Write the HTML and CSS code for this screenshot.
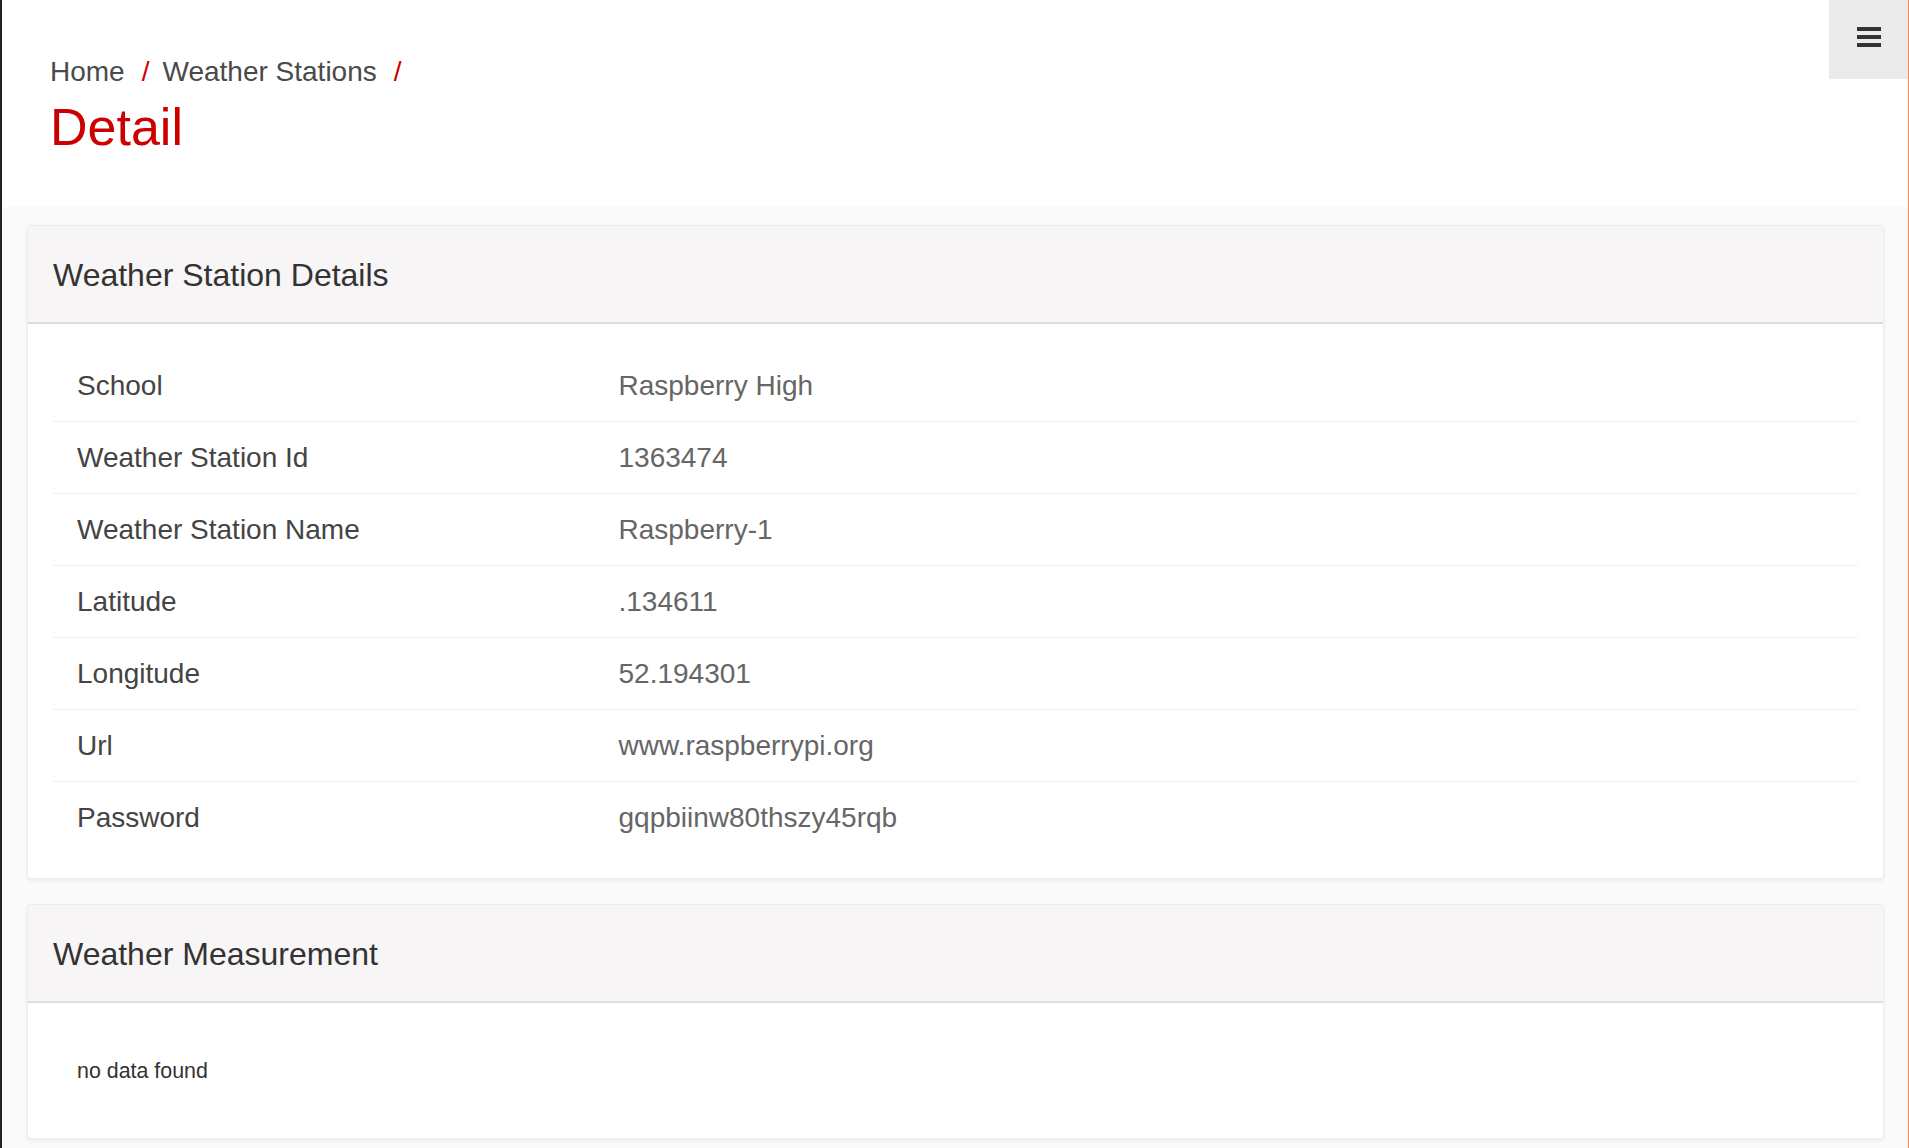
FILE: index.html
```html
<!DOCTYPE html>
<html lang="en">
<head>
<meta charset="utf-8">
<title>Detail</title>
<link rel="stylesheet" href="styles.css">
</head>
<body>
<div class="page">
  <header class="page-header">
    <nav class="breadcrumb">
      <span class="crumb">Home</span><span class="sep">/</span><span class="crumb">Weather Stations</span><span class="sep">/</span>
    </nav>
    <h1 class="page-title">Detail</h1>
    <button class="menu-btn" aria-label="menu">
      <span class="bar"></span><span class="bar"></span><span class="bar"></span>
    </button>
  </header>
  <main class="content">
    <section class="card">
      <div class="card-header"><h2 class="card-title">Weather Station Details</h2></div>
      <div class="card-body">
        <table class="detail-table">
          <colgroup><col class="col-label"><col></colgroup>
          <tbody>
            <tr><td class="label">School</td><td class="value">Raspberry High</td></tr>
            <tr><td class="label">Weather Station Id</td><td class="value">1363474</td></tr>
            <tr><td class="label">Weather Station Name</td><td class="value">Raspberry-1</td></tr>
            <tr><td class="label">Latitude</td><td class="value">.134611</td></tr>
            <tr><td class="label">Longitude</td><td class="value">52.194301</td></tr>
            <tr><td class="label">Url</td><td class="value">www.raspberrypi.org</td></tr>
            <tr><td class="label">Password</td><td class="value">gqpbiinw80thszy45rqb</td></tr>
          </tbody>
        </table>
      </div>
    </section>
    <section class="card">
      <div class="card-header"><h2 class="card-title">Weather Measurement</h2></div>
      <div class="card-body">
        <p class="empty">no data found</p>
      </div>
    </section>
  </main>
</div>
</body>
</html>
```
FILE: styles.css
```css
* { box-sizing: border-box; }
html, body { margin: 0; padding: 0; }
body {
  font-family: "Liberation Sans", Arial, sans-serif;
  background: #fafafa;
  color: #333;
}
.page {
  min-height: 1148px;
  border-left: 2px solid #222;
  border-right: 1px solid #f28c5f;
  background: #fafafa;
}
.page-header {
  position: relative;
  background: #fff;
  height: 207px;
  padding: 51px 0 0 48px;
}
.breadcrumb {
  font-size: 28px;
  line-height: 42px;
  color: #4a4a4a;
}
.sep {
  color: #c00;
  padding: 0 13px 0 17px;
}
.page-title {
  margin: 3px 0 0 0;
  font-size: 52px;
  line-height: 62px;
  font-weight: 400;
  color: #c00;
}
.menu-btn {
  position: absolute;
  top: 0;
  right: 0;
  width: 79px;
  height: 79px;
  border: 0;
  padding: 0;
  background: #ebebeb;
  display: flex;
  flex-direction: column;
  align-items: center;
  justify-content: center;
  gap: 4px;
  padding-bottom: 6px;
}
.bar {
  display: block;
  width: 24px;
  height: 4px;
  background: #333;
}
.content {
  padding: 18px 24px 0 25px;
  display: flex;
  flex-direction: column;
  gap: 25px;
}
.card {
  background: #fff;
  border: 1px solid #ececec;
  border-radius: 3px;
  box-shadow: 0 2px 4px rgba(0, 0, 0, 0.05);
}
.card-header {
  background: #f7f5f5;
  border-bottom: 2px solid #e1dcdb;
  height: 98px;
  padding: 30px 25px 0 25px;
  border-radius: 3px 3px 0 0;
}
.card-title {
  margin: 0;
  font-size: 32px;
  line-height: 38px;
  font-weight: 400;
  color: #333;
}
.card-body {
  padding: 26px 25px 25px 25px;
}
.detail-table {
  width: 100%;
  border-collapse: collapse;
  font-size: 28px;
  line-height: 42px;
}
.col-label { width: 30%; }
.detail-table td {
  padding: 15px 24px 14px 24px;
  vertical-align: top;
}
.detail-table tr + tr td {
  border-top: 1px solid #efefef;
}
.label { color: #444; }
.value { color: #666; }
.empty {
  margin: 0;
  padding: 26px 24px 26px 24px;
  font-size: 21.4px;
  line-height: 32px;
  color: #333;
}
```
